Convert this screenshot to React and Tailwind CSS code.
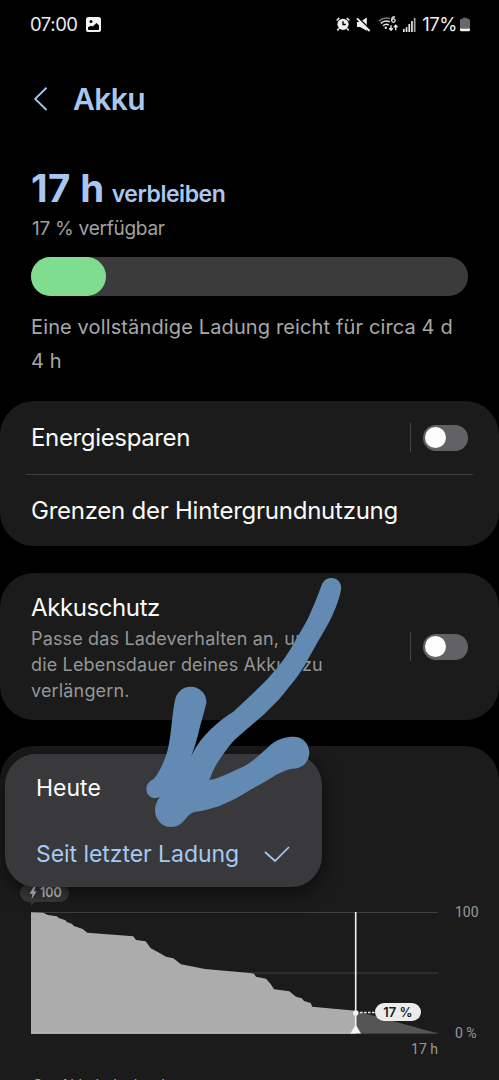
import React, { useState } from "react";

const LEVELS = [
  [0, 0.3], [12, 0.7], [17, 3], [25.7, 4.3], [28.3, 6.3], [34, 8], [36.3, 10.3],
  [40.7, 11.7], [43, 14], [51.7, 17], [56.3, 20.7], [102.3, 24.3], [105, 28],
  [114.7, 29.3], [119.7, 36.3], [127.3, 40.3], [135, 44.7], [142.3, 46.3],
  [150, 52.3], [174, 57], [219, 61], [223, 61.7], [225, 64.7], [235, 66.7],
  [239.7, 72], [243, 77.3], [258.3, 79.3], [265, 84.7], [270.7, 86.3], [273, 89],
  [279.7, 91], [281.3, 94.7], [324.7, 98.7],
];

function StatusBar() {
  return (
    <div className="h-12 pl-[30px] pr-[29px] flex items-center justify-between text-[#ededed]">
      <div className="flex items-center gap-[8px]">
        <span className="mt-px text-[18.5px] tracking-[-0.45px]">07:00</span>
        <svg className="w-[15px] h-[15px]" viewBox="0 0 15 15">
          <rect width="15" height="15" rx="2.6" fill="#f4f4f4" />
          <circle cx="5" cy="4.6" r="1.5" fill="#000" />
          <path d="M2 10.2 5 8.8l1.600.7L10.600 6 13 8.600v3.600q0 .8-.8.8H2.800q-.8 0-.8-.8z" fill="#000" />
        </svg>
      </div>
      <div className="flex items-center">
        {/* Alarm */}
        <svg className="w-[14px] h-[14px]" viewBox="0 0 14 14">
          <circle cx="7" cy="7.3" r="5.6" fill="#f0f0f0" />
          <path d="M.7 3.5 3.2 1M13.3 3.5 10.8 1M2.8 11.6 1.4 13.4M11.2 11.6l1.4 1.8" stroke="#f0f0f0" strokeWidth="1.6" fill="none" />
          <path d="M7 4.2v3.3h2.8" stroke="#000" strokeWidth="1.4" fill="none" />
        </svg>
        {/* Muted */}
        <svg className="ml-[6px] w-[15px] h-[15px]" viewBox="0 0 15 15">
          <path d="M1 5h3L10.800.6v13.200L4 10H1z" fill="#f0f0f0" />
          <path d="M2.200.6 14.600 13" stroke="#000" strokeWidth="1.600" />
          <path d="M1 1.400 13.600 14" stroke="#f0f0f0" strokeWidth="1.900" />
        </svg>
        {/* Wi-Fi 6 */}
        <svg className="ml-[7px] w-[21px] h-[16px]" viewBox="0 0 21 16">
          <g fill="none" strokeWidth="1.5">
            <path d="M.8 5.2Q5.6.9 12 2.4" stroke="#777" />
            <path d="M2.8 7.4q3.7-3.6 9-1.6" stroke="#e6e6e6" />
            <path d="M5 9.8q2.8-2.7 5.8-.8" stroke="#e6e6e6" />
            <path d="M17 1h-1.4q-1.8.2-1.8 2.7v.6" stroke="#e6e6e6" strokeWidth="1.3" />
            <circle cx="15.4" cy="4.6" r="1.7" stroke="#e6e6e6" strokeWidth="1.3" />
            <path d="M13 9.2v5M11.2 12.2l1.8 2 1.8-2M17.7 14.2v-5M15.900 11.200l1.800-2 1.800 2" stroke="#e6e6e6" strokeWidth="1.4" />
          </g>
          <circle cx="7.800" cy="11.800" r="1.200" fill="#e6e6e6" />
        </svg>
        {/* Signal */}
        <svg className="ml-[3px] w-[14px] h-[15px]" viewBox="0 0 14 15" fill="#e6e6e6">
          <path d="M1 12h1.700v3H1zM3.700 10.200h1.700V15H3.700zM6.400 7h1.700v8H6.400zM9.100 4h1.700v11H9.100z" />
          <path d="M11.800.8h1.700V15h-1.700z" fill="#a8a8a8" />
        </svg>
        <span className="ml-[6px] mt-px text-[18.5px] tracking-[-0.5px]">17%</span>
        <svg className="ml-[3px] w-[10px] h-[15px]" viewBox="0 0 11 15">
          <path d="M3 0h5v1.500h1.500Q11 1.500 11 3v9H0V3q0-1.500 1.500-1.500H3z" fill="#686868" />
          <path d="M0 12h11v1.500Q11 15 9.500 15h-8Q0 15 0 13.500z" fill="#f4f4f4" />
        </svg>
      </div>
    </div>
  );
}

function Toggle({ checked, onChange }) {
  return (
    <div className="flex items-center">
      <div className="w-px h-[29px] bg-[#464646] mr-[12px]" />
      <button
        role="switch"
        aria-checked={checked}
        onClick={onChange}
        className={`w-[45px] h-[26px] rounded-full bg-[#626166] flex items-center px-[2px] ${checked ? "justify-end" : "justify-start"}`}
      >
        <span className="w-[21px] h-[21px] rounded-full bg-[#fcfcfc]" />
      </button>
    </div>
  );
}

function BatteryChart() {
  const line = LEVELS.map(([x, y]) => `${x},${y}`).join(" ");
  return (
    <div className="relative ml-[31px] w-[440px]">
      <svg className="w-[407px] h-[122px] overflow-visible" viewBox="0 0 407 122">
        <path d="M0 .5h407M0 61h407M0 121h407" stroke="#3f3f3f" />
        <polygon points="324.700,98.700 407,121.500 324.700,121.500" fill="#545454" />
        <polygon points={`${line} 324.700,121.500 0,121.500`} fill="#acacac" />
        <path d="M0 121.200h324.700" stroke="#c4c4c4" />
        <path d="M324.700 0v121" stroke="#f2f2f2" strokeWidth="1.600" />
        <circle cx="324.700" cy="101" r="2.700" fill="#f4f4f4" />
        <path d="M329 100.500h16" stroke="#e8e8e8" strokeWidth="1.300" strokeDasharray="2.600 1.400" />
        <path d="m324.700 112.500 5.300 9h-10.600z" fill="#f4f4f4" />
      </svg>
      <span className="absolute left-[344px] top-[91px] w-[46px] h-[18px] rounded-full bg-[#ececec] text-[#1b1b1b] text-[13px] font-semibold leading-[18px] text-center">
        17 %
      </span>
      <span className="absolute left-[424px] top-[-9px] text-[14px] leading-[18px] text-[#999] font-[Roboto]">100</span>
      <span className="absolute left-[424px] top-[112px] text-[14px] leading-[18px] text-[#999] font-[Roboto]">0 %</span>
      <span className="absolute right-[33px] top-[128px] text-[14px] leading-[18px] text-[#999] font-[Roboto]">17 h</span>
    </div>
  );
}

export default function App() {
  const [powerSaving, setPowerSaving] = useState(false);
  const [protection, setProtection] = useState(false);

  return (
    <div className="relative w-[499px] h-[1080px] overflow-hidden bg-black font-[Inter,sans-serif] whitespace-nowrap">
      <StatusBar />

      {/* Header */}
      <header className="h-[102px] pl-[34px] flex items-center text-[#a8c7f0]">
        <svg className="w-[14px] h-[25px]" viewBox="0 0 14 25" fill="none" stroke="currentColor" strokeWidth="1.900">
          <path d="M12.500.8 1.200 11.800l11.300 11.200" />
        </svg>
        <h1 className="ml-[25px] text-[30px] leading-[36px] font-semibold tracking-[-0.6px]">Akku</h1>
      </header>

      {/* Remaining charge */}
      <section className="h-[251px] pl-[31px] pt-[16px]">
        <div className="h-[44px] flex items-baseline text-[#a8c7f0] leading-[44px]">
          <span className="text-[38.5px] font-bold tracking-[0.4px]">17 h</span>
          <span className="ml-[7px] text-[23px] font-semibold tracking-[-0.45px]">verbleiben</span>
        </div>
        <p className="mt-[7px] ml-px text-[19px] leading-[24px] tracking-[-0.25px] text-[#a0a0a0]">17 % verfügbar</p>
        <div className="mt-[16px] w-[437px] h-[39px] rounded-full bg-[#3b3b3b]">
          <div className="w-[75px] h-full rounded-full bg-[#80dd90]" />
        </div>
        <p className="mt-[14px] text-[20px] leading-[34px] tracking-[0.13px] text-[#a8a8a8]">
          Eine vollständige Ladung reicht für circa 4 d
          <br />4 h
        </p>
      </section>

      {/* Power saving */}
      <section className="h-[145px] rounded-[34px] bg-[#1b1b1b] text-[#fafafa] text-[24px] tracking-[-0.25px]">
        <div className="h-[73px] pl-[31px] pr-[31px] flex items-center justify-between">
          <span className="tracking-[-0.35px]">Energiesparen</span>
          <Toggle checked={powerSaving} onChange={() => setPowerSaving(!powerSaving)} />
        </div>
        <div className="mx-[26px] h-px bg-[#3d3d3d]" />
        <div className="h-[71px] pl-[31px] flex items-center">Grenzen der Hintergrundnutzung</div>
      </section>

      {/* Battery protection */}
      <section className="mt-[27px] h-[147px] px-[31px] rounded-[34px] bg-[#1b1b1b] flex items-center justify-between">
        <div className="pt-[2px]">
          <h2 className="text-[24px] leading-[34px] tracking-[-0.4px] text-[#fafafa]">Akkuschutz</h2>
          <p className="mt-px text-[18px] leading-[26px] tracking-[0.16px] text-[#969696]">
            Passe das Ladeverhalten an, um
            <br />
            die Lebensdauer deines Akkus zu
            <br />
            verlängern.
          </p>
        </div>
        <Toggle checked={protection} onChange={() => setProtection(!protection)} />
      </section>

      {/* Usage */}
      <section className="mt-[26px] h-[420px] pt-[138px] rounded-[34px] bg-[#1b1b1b]">
        <div className="relative ml-[20px] mb-[9px] w-[49px] h-[18px] rounded-full bg-[#3a3a3b] flex items-center pl-[9px] text-[#d0d0d0]">
          <svg className="w-[8px] h-[12px]" viewBox="0 0 8 12" fill="currentColor">
            <path d="M4.500 0h2L5 4.200h2.600L2.600 12l1-5.200H.6z" />
          </svg>
          <span className="ml-[3px] text-[12.5px] font-semibold">100</span>
          <span className="absolute left-[11px] top-[18px] border-t-4 border-r-4 border-t-[#3a3a3b] border-r-transparent" />
        </div>
        <div className="pt-px">
          <BatteryChart />
        </div>
        <p className="ml-[32px] mt-[39px] text-[15px] leading-[24px] text-[#a0a0a0]">Ca. Akkuladestand</p>
      </section>

      {/* Period menu */}
      <div className="absolute left-[5px] top-[754px] w-[317px] h-[133px] pl-[31px] pr-[32px] rounded-[31px] bg-[#39393b] shadow-[0_5px_20px_rgba(0,0,0,0.6)] flex flex-col text-[23px]">
        <div className="h-[68px] flex items-center text-[#fafafa]">Heute</div>
        <div className="h-[65px] flex items-center justify-between text-[#a3caf5]">
          <span className="tracking-[-0.05px]">Seit letzter Ladung</span>
          <svg className="w-[26px] h-[17px]" viewBox="0 0 26 17" fill="none" stroke="currentColor" strokeWidth="1.700">
            <path d="m1 6 10 9L25 1" />
          </svg>
        </div>
      </div>

      {/* Hand-drawn arrow */}
      <svg className="absolute left-[130px] top-[560px] w-[230px] h-[280px] pointer-events-none" viewBox="0 0 690 840">
        <path
          fill="#628ab3"
          d="M575 75C583 58 593 54 606 54 624 55 636 70 633 90 629 112 621 135 609 162 597 190 577 222 555 260 535 296 516 334 490 365 468 390 452 416 430 435L400 465 330 525C315 537 301 552 285 575 263 605 252 622 238 660 270 655 307 633 340 620 370 604 391 582 425 552 445 537 467 530 490 530 520 530 538 553 538 578 537 605 518 627 485 626 463 630 435 645 410 662L360 690C335 707 307 722 275 735 245 747 220 752 193 756 172 763 169 777 155 789 145 798 134 801 122 801 96 801 76 779 75 752 75 735 81 721 90 712 65 720 49 706 49 687 50 667 64 663 73 655 89 635 105 600 113 570 125 520 125 470 134 425 138 398 157 380 182 380 211 380 232 404 229 430 223 455 215 480 208 508 201 540 192 567 182 592 195 565 209 541 235 515 262 488 280 474 310 455L350 418C373 395 404 369 425 343 447 320 477 279 500 235 514 211 533 181 545 150 557 125 565 101 575 75Z"
        />
      </svg>
    </div>
  );
}
